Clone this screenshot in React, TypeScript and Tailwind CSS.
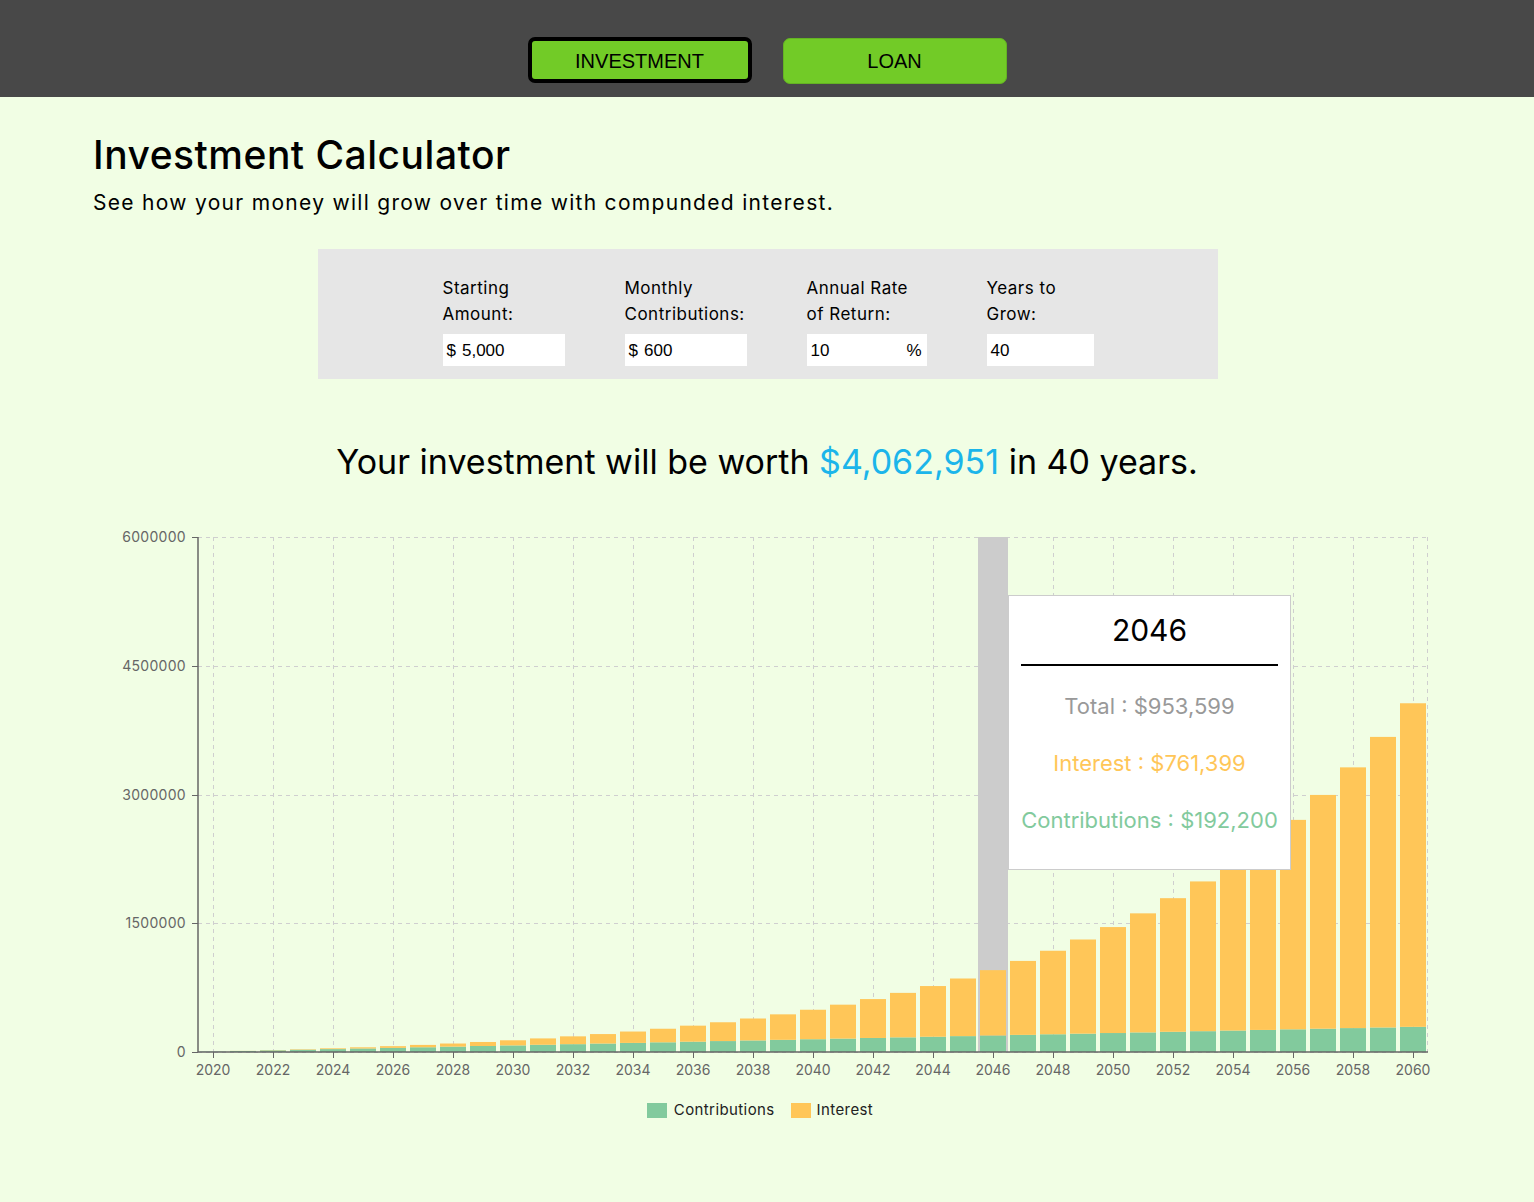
import React from "react";

const FONT = { fontFamily: "Inter, 'Noto Sans', sans-serif" };
const ARIAL = { fontFamily: "'Liberation Sans', Arial, sans-serif" };

const data = Array.from({ length: 41 }, (_, n) => {
  const r = 0.1 / 12;
  const m = n * 12;
  const g = Math.pow(1 + r, m);
  const total = 5000 * g + (m ? (600 * (g - 1)) / r : 0);
  const contrib = 5000 + 600 * m;
  return { year: 2020 + n, total, contrib, interest: total - contrib };
});

const Y0 = 1052;
const YTOP = 537;
const X0 = 198;
const X1 = 1428;
const yv = (v: number) => Y0 - (v / 6000000) * (Y0 - YTOP);
const crisp = (v: number) => Math.round(v) + 0.5;

function Chart() {
  const yTicks = [0, 1500000, 3000000, 4500000, 6000000];
  const xTicks = data.filter((_, i) => i % 2 === 0);
  return (
    <svg
      width={1340}
      height={570}
      viewBox="100 520 1340 570"
      className="block"
      style={FONT}
    >
      {yTicks.map((t) => (
        <line
          key={t}
          x1={X0}
          x2={X1}
          y1={crisp(yv(t))}
          y2={crisp(yv(t))}
          stroke="#cfcfcf"
          strokeDasharray="4 4"
        />
      ))}
      {xTicks.map((d) => {
        const i = d.year - 2020;
        const cx = X0 + i * 30 + 15;
        return (
          <line
            key={d.year}
            x1={cx + 0.5}
            x2={cx + 0.5}
            y1={YTOP}
            y2={Y0}
            stroke="#cfcfcf"
            strokeDasharray="4 4"
          />
        );
      })}
      <line x1={X1 - 0.5} x2={X1 - 0.5} y1={YTOP} y2={Y0} stroke="#cfcfcf" strokeDasharray="4 4" />
      <rect x={X0 + 26 * 30} y={YTOP} width={30} height={Y0 - YTOP} fill="#ccc" />
      {data.map((d, i) => {
        const x = X0 + i * 30 + 2;
        const yc = yv(d.contrib);
        const yt = yv(d.total);
        return (
          <g key={d.year}>
            <rect x={x} y={yc} width={26} height={Y0 - yc} fill="#82ca9d" />
            <rect x={x} y={yt} width={26} height={yc - yt} fill="#ffc658" />
          </g>
        );
      })}
      <line x1={X0} x2={X0} y1={YTOP} y2={Y0} stroke="#666" strokeWidth={1.5} />
      <line x1={X0} x2={X1} y1={Y0} y2={Y0} stroke="#666" strokeWidth={1.5} />
      {yTicks.map((t) => (
        <g key={t}>
          <line x1={X0 - 6} x2={X0} y1={crisp(yv(t))} y2={crisp(yv(t))} stroke="#666" />
          <text
            x={X0 - 12}
            y={yv(t) + 5}
            textAnchor="end"
            fontSize={14}
            fill="#666"
            letterSpacing="0.3"
          >
            {t}
          </text>
        </g>
      ))}
      {xTicks.map((d) => {
        const i = d.year - 2020;
        const cx = X0 + i * 30 + 15;
        return (
          <g key={d.year}>
            <line x1={cx + 0.5} x2={cx + 0.5} y1={Y0} y2={Y0 + 6} stroke="#666" />
            <text x={cx} y={Y0 + 23} textAnchor="middle" fontSize={14} fill="#666">
              {d.year}
            </text>
          </g>
        );
      })}
    </svg>
  );
}

function Field({
  label,
  value,
  width,
  prefix,
  suffix,
}: {
  label: React.ReactNode;
  value: string;
  width: string;
  prefix?: string;
  suffix?: string;
}) {
  return (
    <div className={`flex flex-col ${width}`}>
      <div className="text-[17px] leading-[26px] text-black tracking-[0.5px]" style={FONT}>
        {label}
      </div>
      <div
        className="mt-[7px] h-[32px] bg-white flex items-center px-[4px] pt-[2px] text-[17px] text-black"
        style={ARIAL}
      >
        {prefix && <span className="mr-[6px]">{prefix}</span>}
        <span className="flex-1">{value}</span>
        {suffix && <span className="mr-[1px]">{suffix}</span>}
      </div>
    </div>
  );
}

export default function App() {
  return (
    <div className="min-h-[1202px] bg-[#f1fee4]" style={FONT}>
      <header className="h-[97px] bg-[#484848] flex justify-center pt-[37px] gap-[31px]">
        <button
          className="w-[224px] h-[46px] pt-[2px] bg-[#72cb27] border-[4px] border-black rounded-[7px] text-[20px] text-black"
          style={ARIAL}
        >
          INVESTMENT
        </button>
        <button
          className="w-[224px] h-[46px] mt-[1px] bg-[#72cb27] border border-[#64b323] rounded-[7px] text-[20px] text-black"
          style={ARIAL}
        >
          LOAN
        </button>
      </header>
      <main>
        <div className="px-[93px] pt-[34px]">
          <h1 className="text-[39px] leading-[48px] font-medium text-black tracking-[0.5px]">
            Investment Calculator
          </h1>
          <p className="mt-[9px] text-[21px] leading-[30px] text-black tracking-[1.3px]">
            See how your money will grow over time with compunded interest.
          </p>
        </div>
        <div className="mt-[31px] mx-auto w-[900px] h-[130px] bg-[#e6e6e6] flex justify-center gap-[60px] pt-[26px] translate-x-[1px]">
          <Field label={<>Starting<br />Amount:</>} value="5,000" prefix="$" width="w-[122px]" />
          <Field label={<>Monthly<br />Contributions:</>} value="600" prefix="$" width="w-[122px]" />
          <Field label={<>Annual Rate<br />of Return:</>} value="10" suffix="%" width="w-[120px]" />
          <Field label={<>Years to<br />Grow:</>} value="40" width="w-[107px]" />
        </div>
        <p className="mt-[61px] text-center text-[34px] leading-[44px] text-black">
          Your investment will be worth{" "}
          <span className="text-[#1bb5ea]">$4,062,951</span> in 40 years.
        </p>
        <div className="relative mt-[36px]">
          <div className="ml-[100px]">
            <Chart />
          </div>
          <div className="absolute left-[1008px] top-[75px] w-[283px] h-[275px] bg-white border border-[#ccc] flex flex-col items-center">
            <div className="mt-[14px] text-[30px] leading-[40px] text-black">2046</div>
            <div className="mt-[14px] w-[257px] h-[1.5px] bg-black" />
            <div className="mt-[25px] text-[22px] leading-[30px] text-[#999]">
              Total : $953,599
            </div>
            <div className="mt-[27px] text-[22px] leading-[30px] text-[#ffc658]">
              Interest : $761,399
            </div>
            <div className="mt-[27px] text-[22px] leading-[30px] text-[#82ca9d]">
              Contributions : $192,200
            </div>
          </div>
        </div>
        <div className="mt-[9px] flex justify-center items-center text-[15px] text-[#222] tracking-[0.4px] translate-x-[-7px]">
          <span className="w-[20px] h-[15px] bg-[#82ca9d] mr-[7px]" />
          <span>Contributions</span>
          <span className="w-[20px] h-[15px] bg-[#ffc658] ml-[16px] mr-[6px]" />
          <span>Interest</span>
        </div>
      </main>
    </div>
  );
}
